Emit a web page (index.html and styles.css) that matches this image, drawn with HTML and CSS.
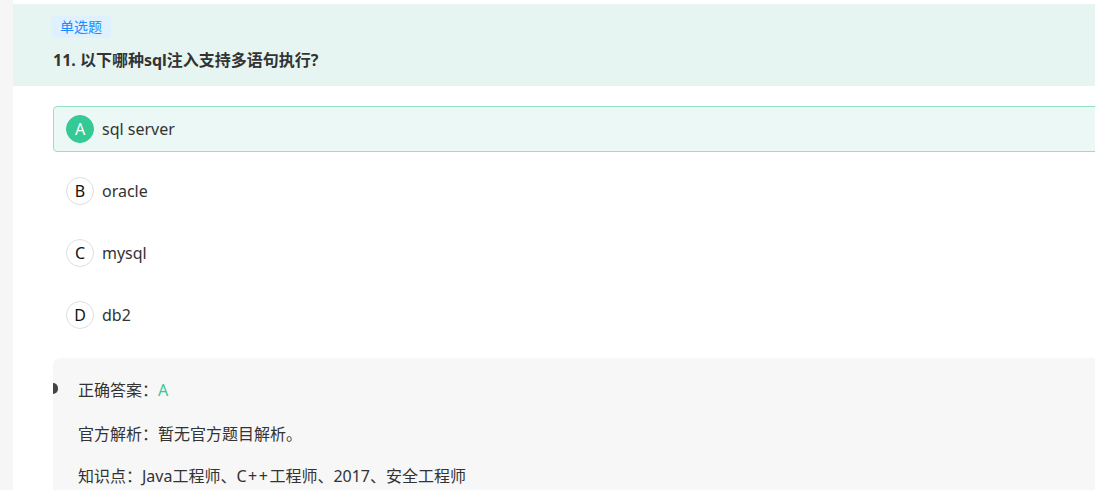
FILE: index.html
```html
<!DOCTYPE html>
<html lang="zh-CN">
<head>
<meta charset="utf-8">
<link rel="stylesheet" href="styles.css">
</head>
<body>
<div class="page">
  <div class="side"></div>
  <div class="main">
    <div class="head">
      <span class="tag">单选题</span>
      <h2 class="title">11. 以下哪种sql注入支持多语句执行?</h2>
    </div>
    <ul class="options">
      <li class="option selected"><span class="letter">A</span><span class="otext">sql server</span></li>
      <li class="option"><span class="letter">B</span><span class="otext">oracle</span></li>
      <li class="option"><span class="letter">C</span><span class="otext">mysql</span></li>
      <li class="option"><span class="letter">D</span><span class="otext">db2</span></li>
    </ul>
    <div class="answer">
      <span class="marker"></span>
      <p class="row r1">正确答案：<span class="right">A</span></p>
      <p class="row r2">官方解析：暂无官方题目解析。</p>
      <p class="row r3">知识点：Java工程师、<span class="cpp">C++</span>工程师、2017、安全工程师</p>
    </div>
  </div>
</div>
</body>
</html>
```
FILE: styles.css
```css
html, body {
  margin: 0;
  padding: 0;
  background: #fff;
  overflow: hidden;
}
body {
  font-family: "Noto Sans", "Noto Sans CJK SC", sans-serif;
  color: #333;
}
.page {
  display: flex;
  width: 1260px;
  height: 490px;
}
.side {
  width: 13px;
  flex: none;
  background: #f6f6f6;
}
.main {
  flex: 1;
  padding-top: 4px;
}
.head {
  background: #e6f5f1;
  height: 82px;
  box-sizing: border-box;
  padding: 11px 0 0 40px;
}
.tag {
  display: inline-block;
  background: #dff0ff;
  color: #1a8cff;
  font-size: 14px;
  line-height: 22px;
  height: 22px;
  padding: 0 9px;
  border-radius: 4px;
  margin-left: -2px;
}
.title {
  margin: 10px 0 0;
  font-size: 16px;
  font-weight: 700;
  line-height: 24px;
  color: #333;
}
.options {
  list-style: none;
  margin: 20px 0 0 40px;
  padding: 0;
}
.option {
  display: flex;
  align-items: center;
  height: 46px;
  box-sizing: border-box;
  padding-left: 12px;
  margin-bottom: 16px;
  border: 1px solid transparent;
  border-radius: 4px;
  font-size: 16px;
}
.option.selected {
  background: #ebf8f5;
  border-color: #94e2c6;
}
.letter {
  width: 28px;
  height: 28px;
  box-sizing: border-box;
  border: 1px solid #dedede;
  border-radius: 50%;
  display: flex;
  align-items: center;
  justify-content: center;
  font-size: 16px;
  color: #111;
  background: #fff;
  margin-right: 8px;
}
.selected .letter {
  background: #35c996;
  border-color: #35c996;
  color: #fff;
}
.otext {
  color: #333;
}
.answer {
  position: relative;
  margin: 20px 0 0 40px;
  background: #f7f7f7;
  border-radius: 8px 0 0 0;
  padding: 20px 0 0 25px;
  height: 200px;
}
.marker {
  position: absolute;
  left: 0;
  top: 25px;
  width: 5px;
  height: 11px;
  background: #444;
  border-radius: 0 6px 6px 0;
}
.row {
  margin: 0;
  font-size: 16px;
  line-height: 24px;
  color: #333;
}
.r2 { margin-top: 20px; }
.r3 { margin-top: 18px; }
.cpp { letter-spacing: 1.5px; }
.right {
  color: #35c996;
}
```
